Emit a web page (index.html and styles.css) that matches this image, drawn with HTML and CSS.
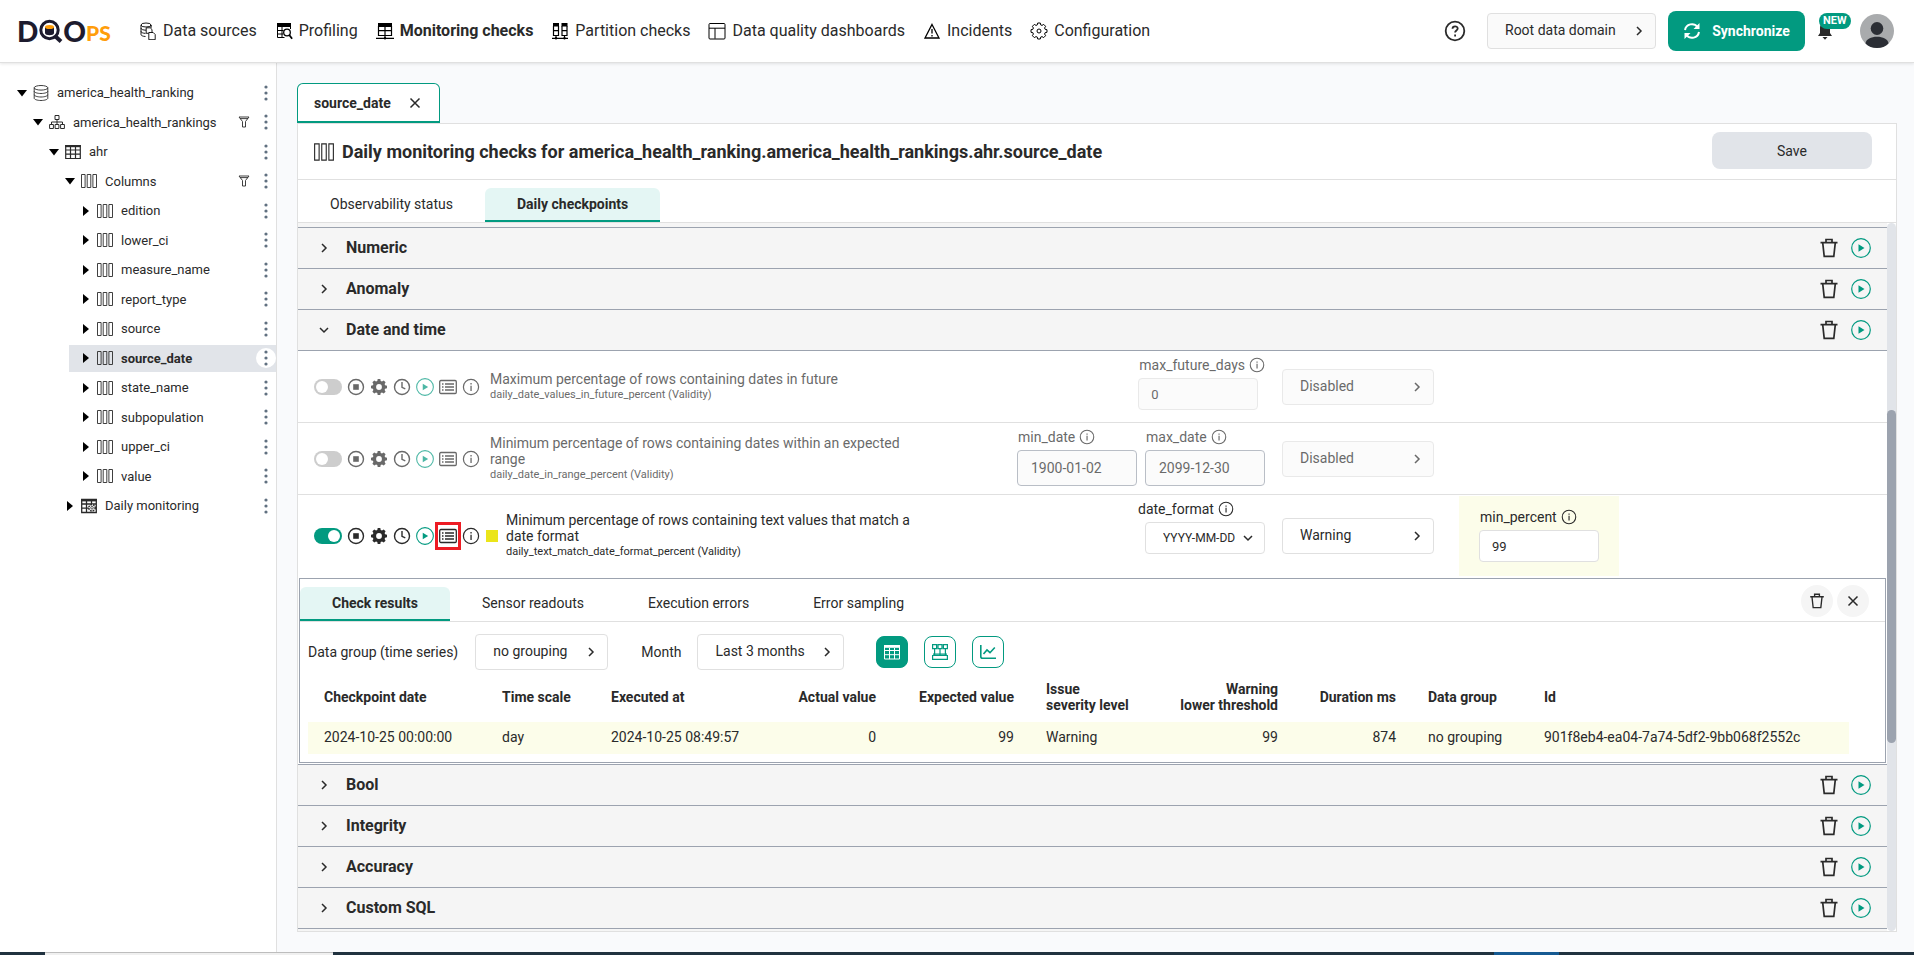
FILE: index.html
```
<!DOCTYPE html>
<html lang="en">
<head>
  <meta charset="UTF-8">
  <meta name="viewport" content="width=device-width, initial-scale=1.0">
  <title>DQOps - Daily monitoring checks</title>
  <link rel="stylesheet" href="styles.css">
</head>
<body>

  <!-- Icons -->
  <svg class="sprite" xmlns="http://www.w3.org/2000/svg">
    <symbol id="i-column" viewBox="0 0 16 16"><path d="M.5 1.5h3.6v13H.5zM6.2 1.5h3.6v13H6.2zM11.9 1.5h3.6v13h-3.6z" fill="none" stroke="currentColor" stroke-width=".9"/></symbol>
    <symbol id="i-db" viewBox="0 0 16 16"><g fill="none" stroke="currentColor" stroke-width=".9"><ellipse cx="8" cy="2.8" rx="6.8" ry="2.3"/><path d="M1.2 2.8v10.4c0 1.2 3 2.3 6.8 2.3s6.8-1.1 6.8-2.3V2.8M1.2 6.2c0 1.2 3 2.3 6.8 2.3s6.8-1.1 6.8-2.3M1.2 9.7c0 1.2 3 2.3 6.8 2.3s6.8-1.1 6.8-2.3"/></g></symbol>
    <symbol id="i-schema" viewBox="0 0 16 16"><path d="M6 1.5h4v4H6zM.6 10.5h3.8v4H.6zM6.1 10.5h3.8v4H6.1zM11.6 10.5h3.8v4h-3.8zM8 5.500v5M2.500 10.500V8h11v2.500" fill="none" stroke="currentColor"/></symbol>
    <symbol id="i-table" viewBox="0 0 16 16"><path d="M.7 1.500h14.600v13H.7zM.7 6h14.600M.7 10.200h14.600M5.500 2v12.500M10.500 2v12.500" fill="none" stroke="currentColor" stroke-width="1.200"/><path d="M.2 1h15.600v2.200H.2z"/></symbol>
    <symbol id="i-daily" viewBox="0 0 16 16"><path d="M.7 1.500h14.600v13H.7zM.7 6h14.600M.7 10.200h14.600M5.500 2v12.500M10.500 2v4" fill="none" stroke="currentColor" stroke-width="1.300"/><path d="M.2 1h15.600v2.400H.2z"/><circle cx="11" cy="9.800" r="3.200" fill="#fff" stroke="currentColor" stroke-width="1.500" stroke-dasharray="1.700 .9"/><circle cx="11" cy="9.800" r="1.300" fill="none" stroke="currentColor" stroke-width=".8"/></symbol>
    <symbol id="i-caret-down" viewBox="0 0 10 10"><path d="M0 2h10L5 8.500z"/></symbol>
    <symbol id="i-caret-right" viewBox="0 0 10 10"><path d="M2 0v10l6-5z"/></symbol>
    <symbol id="i-filter" viewBox="0 0 12 12"><path d="M1 1h10L7.500 5.500V11h-3V5.500zM2 2.600h8" fill="none" stroke="currentColor" stroke-width=".9"/></symbol>
    <symbol id="i-dots" viewBox="0 0 20 20"><circle cx="10" cy="4" r="1.600"/><circle cx="10" cy="10" r="1.600"/><circle cx="10" cy="16" r="1.600"/></symbol>
    <symbol id="i-right" viewBox="0 0 12 12"><path d="M4 2l4 4-4 4" fill="none" stroke="currentColor" stroke-width="1.500"/></symbol>
    <symbol id="i-down" viewBox="0 0 12 12"><path d="M2 4l4 4 4-4" fill="none" stroke="currentColor" stroke-width="1.500"/></symbol>
    <symbol id="i-trash" viewBox="0 0 20 20"><path d="M1.500 4.700h17M3.700 4.700l1.500 13.600h9.600l1.500-13.600M7 4.500V1.500h6v3" fill="none" stroke="currentColor" stroke-width="1.700"/></symbol>
    <symbol id="i-play" viewBox="0 0 20 20"><circle cx="10" cy="10" r="9.300" fill="none" stroke="currentColor" stroke-width="1.200"/><path d="M7.500 6.300v7.400l6-3.700z"/></symbol>
    <symbol id="i-stop" viewBox="0 0 18 18"><circle cx="9" cy="9" r="7.500" fill="none" stroke="currentColor" stroke-width="1.400"/><path d="M6.200 6.200h5.600v5.600H6.200z"/></symbol>
    <symbol id="i-gear" viewBox="0 0 18 18"><path fill-rule="evenodd" d="M7.700 1h2.600l.4 1.900 1.300.5 1.700-1 1.900 1.900-1 1.700.5 1.300 1.900.4v2.600l-1.900.4-.5 1.300 1 1.700-1.900 1.900-1.700-1-1.300.5-.4 1.900H7.700l-.4-1.900-1.300-.5-1.700 1-1.900-1.900 1-1.700-.5-1.300L1 10.300V7.700l1.900-.4.5-1.300-1-1.700 1.900-1.900 1.700 1 1.300-.5zM9 6.100a2.900 2.900 0 100 5.800 2.900 2.900 0 000-5.800z"/></symbol>
    <symbol id="i-clock" viewBox="0 0 18 18"><circle cx="9" cy="9" r="7.500" fill="none" stroke="currentColor" stroke-width="1.400"/><path d="M9 4v5.300l3.300 1.500" fill="none" stroke="currentColor" stroke-width="1.400"/></symbol>
    <symbol id="i-list" viewBox="0 0 18 18"><rect x=".7" y="2.500" width="16.600" height="13" rx="1.200" fill="none" stroke="currentColor" stroke-width="1.300"/><path d="M3 6h1.500M3 9h1.500M3 12h1.500M6 6h9M6 9h9M6 12h9" stroke="currentColor" stroke-width="1.300"/></symbol>
    <symbol id="i-info" viewBox="0 0 18 18"><circle cx="9" cy="9" r="7.600" fill="none" stroke="currentColor" stroke-width="1.200"/><path d="M8.400 5h1.300v1.400H8.400zM8.400 7.700h1.300V13H8.400z"/></symbol>
    <symbol id="i-close" viewBox="0 0 12 12"><path d="M1.500 1.500l9 9M10.500 1.500l-9 9" fill="none" stroke="currentColor" stroke-width="1.500"/></symbol>
  </svg>

  <!-- Header -->
  <header class="header">
    <a class="logo" href="#" aria-label="DQOps">
      <span>D</span>
      <svg width="25" height="25" viewBox="0 0 25 25"><circle cx="11.500" cy="11" r="8.700" fill="none" stroke="#1d1b2e" stroke-width="3"/><path d="M17 17l6 5.500" stroke="#1d1b2e" stroke-width="4"/><path d="M7 8v6c0 3 9 3 9 0V8z" fill="#1d1b2e"/><ellipse cx="11.500" cy="8" rx="4.500" ry="2" fill="#ff9d0a"/></svg>
      <span>O</span><span class="logo-ps">PS</span>
    </a>
    <nav class="nav">
      <a href="#"><svg viewBox="0 0 18 18"><g fill="none" stroke="currentColor" stroke-width=".9"><ellipse cx="7" cy="3" rx="5" ry="2"/><path d="M2 3v9.500c0 1 1.800 1.900 4.500 2M12 3v3M2 6.200c0 1.100 2.200 2 5 2M2 9.400c0 1 2 1.900 4.500 2M12 3v1.500"/><path d="M7.200 5.800h4l1.800 1.700v3M7.200 5.800v5.500h2.500"/><path d="M9.800 10.500h4.400l2 2v5.200H9.800z" fill="#fff"/></g></svg>Data sources</a>
      <a href="#"><svg viewBox="0 0 18 18"><path d="M2 1h14v4H2z"/><path d="M2.500 4v11.500h7M2.500 8.500h6M2.500 12h5.500M7 4v11.500M15.500 4v3" fill="none" stroke="currentColor"/><circle cx="12" cy="10.500" r="3.300" fill="#fff" stroke="currentColor" stroke-width="1.300"/><path d="M14.300 13l2.800 3.800" stroke="currentColor" stroke-width="1.800"/></svg>Profiling</a>
      <a href="#" class="active"><svg viewBox="0 0 18 18"><path d="M2 1h14v4H2z"/><path d="M2.500 4v9.500h13V4M2.500 8.700h13M9 4v12.500M0 16.300h7M11 16.300h7M7 16.300h4" fill="none" stroke="currentColor" stroke-width="1.200"/><circle cx="9" cy="16.300" r="1.200"/></svg>Monitoring checks</a>
      <a href="#"><svg viewBox="0 0 18 18"><path d="M2 1h6v3.500H2zM10.500 1h6v3.500h-6z"/><path d="M2.500 4v9.500h5V4M11 4v9.500h5V4M2.500 8.700h5M11 8.700h5M5 13.500v3M13.500 13.500v3M1 16.300h16" fill="none" stroke="currentColor" stroke-width="1.200"/><circle cx="5" cy="16.300" r="1.200"/><circle cx="13.500" cy="16.300" r="1.200"/></svg>Partition checks</a>
      <a href="#"><svg viewBox="0 0 18 18"><rect x="1" y="1.500" width="16" height="15.500" rx="1" fill="none" stroke="currentColor"/><path d="M1 6.200h16M7 6.200v10.500" stroke="currentColor"/></svg>Data quality dashboards</a>
      <a href="#"><svg viewBox="0 0 18 18"><path d="M9 2.500L16 16H2zM9 7v4.500M9 13v1.500" fill="none" stroke="currentColor" stroke-width="1.300"/></svg>Incidents</a>
      <a href="#"><svg viewBox="0 0 18 18"><path d="M7.700 1h2.600l.4 1.900 1.300.5 1.700-1 1.900 1.900-1 1.700.5 1.300 1.900.4v2.600l-1.900.4-.5 1.300 1 1.700-1.900 1.900-1.700-1-1.300.5-.4 1.900H7.700l-.4-1.900-1.300-.5-1.700 1-1.900-1.900 1-1.700-.5-1.300L1 10.300V7.700l1.900-.4.5-1.300-1-1.700 1.900-1.900 1.700 1 1.300-.5z" fill="none" stroke="currentColor"/><circle cx="9" cy="9" r="2" fill="none" stroke="currentColor"/></svg>Configuration</a>
    </nav>
    <div class="header-right">
      <button class="icon-btn" aria-label="Help"><svg width="24" height="24" viewBox="0 0 24 24"><g fill="none" stroke="currentColor" stroke-width="1.800"><circle cx="12" cy="12" r="9.300"/><path d="M9.500 9.800c0-3.300 5.200-3.200 5.200-.2 0 1.900-2.600 2-2.600 4"/><path d="M12.100 15.500v2"/></g></svg></button>
      <span class="select select-domain">
        <select aria-label="Data domain"><option>Root data domain</option></select>
        <svg class="chevron"><use href="#i-right"/></svg>
      </span>
      <button class="btn-sync"><svg width="18" height="18" viewBox="0 0 18 18"><path d="M2 8a7 7 0 0112.500-3M16 10a7 7 0 01-12.500 3" fill="none" stroke="currentColor" stroke-width="2"/><path d="M16.500 1v6h-6zM1.500 17v-6h6z"/></svg>Synchronize</button>
      <button class="icon-btn bell" aria-label="Notifications">
        <svg width="16" height="20" viewBox="0 0 16 20"><path d="M8 1.500c3.500 0 5 2.500 5 6v4.500l2 3H1l2-3V7.500c0-3.500 1.500-6 5-6zM5.500 16h5L8 18.800z"/></svg>
        <span class="badge">NEW</span>
      </button>
      <svg class="avatar" width="34" height="34" viewBox="0 0 34 34"><circle cx="17" cy="17" r="17" fill="#a9abad"/><ellipse cx="17" cy="14.500" rx="6.300" ry="6.500" fill="#2b2e35"/><path d="M5.500 29.500C6 20.500 28 20.500 28.500 29.500 23 35.500 11 35.500 5.500 29.500z" fill="#2b2e35"/></svg>
    </div>
  </header>

  <div class="layout">
    <!-- Tree -->
    <aside class="sidebar">
      <ul class="tree">
        <li class="level-0"><svg class="caret"><use href="#i-caret-down"/></svg><svg class="node"><use href="#i-db"/></svg><span>america_health_ranking</span><button class="dots" aria-label="Menu"><svg><use href="#i-dots"/></svg></button></li>
        <li class="level-1"><svg class="caret"><use href="#i-caret-down"/></svg><svg class="node"><use href="#i-schema"/></svg><span>america_health_rankings</span><svg class="filter"><use href="#i-filter"/></svg><button class="dots" aria-label="Menu"><svg><use href="#i-dots"/></svg></button></li>
        <li class="level-2"><svg class="caret"><use href="#i-caret-down"/></svg><svg class="node"><use href="#i-table"/></svg><span>ahr</span><button class="dots" aria-label="Menu"><svg><use href="#i-dots"/></svg></button></li>
        <li class="level-3"><svg class="caret"><use href="#i-caret-down"/></svg><svg class="node"><use href="#i-column"/></svg><span>Columns</span><svg class="filter"><use href="#i-filter"/></svg><button class="dots" aria-label="Menu"><svg><use href="#i-dots"/></svg></button></li>
        <li class="level-4"><svg class="caret"><use href="#i-caret-right"/></svg><svg class="node"><use href="#i-column"/></svg><span>edition</span><button class="dots" aria-label="Menu"><svg><use href="#i-dots"/></svg></button></li>
        <li class="level-4"><svg class="caret"><use href="#i-caret-right"/></svg><svg class="node"><use href="#i-column"/></svg><span>lower_ci</span><button class="dots" aria-label="Menu"><svg><use href="#i-dots"/></svg></button></li>
        <li class="level-4"><svg class="caret"><use href="#i-caret-right"/></svg><svg class="node"><use href="#i-column"/></svg><span>measure_name</span><button class="dots" aria-label="Menu"><svg><use href="#i-dots"/></svg></button></li>
        <li class="level-4"><svg class="caret"><use href="#i-caret-right"/></svg><svg class="node"><use href="#i-column"/></svg><span>report_type</span><button class="dots" aria-label="Menu"><svg><use href="#i-dots"/></svg></button></li>
        <li class="level-4"><svg class="caret"><use href="#i-caret-right"/></svg><svg class="node"><use href="#i-column"/></svg><span>source</span><button class="dots" aria-label="Menu"><svg><use href="#i-dots"/></svg></button></li>
        <li class="level-4 selected"><svg class="caret"><use href="#i-caret-right"/></svg><svg class="node"><use href="#i-column"/></svg><span>source_date</span><button class="dots" aria-label="Menu"><svg><use href="#i-dots"/></svg></button></li>
        <li class="level-4"><svg class="caret"><use href="#i-caret-right"/></svg><svg class="node"><use href="#i-column"/></svg><span>state_name</span><button class="dots" aria-label="Menu"><svg><use href="#i-dots"/></svg></button></li>
        <li class="level-4"><svg class="caret"><use href="#i-caret-right"/></svg><svg class="node"><use href="#i-column"/></svg><span>subpopulation</span><button class="dots" aria-label="Menu"><svg><use href="#i-dots"/></svg></button></li>
        <li class="level-4"><svg class="caret"><use href="#i-caret-right"/></svg><svg class="node"><use href="#i-column"/></svg><span>upper_ci</span><button class="dots" aria-label="Menu"><svg><use href="#i-dots"/></svg></button></li>
        <li class="level-4"><svg class="caret"><use href="#i-caret-right"/></svg><svg class="node"><use href="#i-column"/></svg><span>value</span><button class="dots" aria-label="Menu"><svg><use href="#i-dots"/></svg></button></li>
        <li class="level-3"><svg class="caret"><use href="#i-caret-right"/></svg><svg class="node"><use href="#i-daily"/></svg><span>Daily monitoring</span><button class="dots" aria-label="Menu"><svg><use href="#i-dots"/></svg></button></li>
      </ul>
    </aside>

    <main class="main">
      <div class="page-tabs">
        <div class="page-tab">source_date <button class="icon-btn" aria-label="Close tab"><svg width="12" height="12"><use href="#i-close"/></svg></button></div>
      </div>

      <section class="panel">
        <div class="title-bar">
          <svg width="20" height="20"><use href="#i-column"/></svg>
          <h1>Daily monitoring checks for america_health_ranking.america_health_rankings.ahr.source_date</h1>
          <button class="btn-save">Save</button>
        </div>

        <div class="tabs">
          <button class="tab">Observability status</button>
          <button class="tab active">Daily checkpoints</button>
        </div>

        <div class="scroll-area">
          <div class="checks">
            <div class="category"><svg class="chevron"><use href="#i-right"/></svg><h2>Numeric</h2><button class="icon-btn" aria-label="Delete"><svg><use href="#i-trash"/></svg></button><button class="icon-btn green" aria-label="Run"><svg><use href="#i-play"/></svg></button></div>
            <div class="category"><svg class="chevron"><use href="#i-right"/></svg><h2>Anomaly</h2><button class="icon-btn" aria-label="Delete"><svg><use href="#i-trash"/></svg></button><button class="icon-btn green" aria-label="Run"><svg><use href="#i-play"/></svg></button></div>
            <div class="category open"><svg class="chevron"><use href="#i-down"/></svg><h2>Date and time</h2><button class="icon-btn" aria-label="Delete"><svg><use href="#i-trash"/></svg></button><button class="icon-btn green" aria-label="Run"><svg><use href="#i-play"/></svg></button></div>

            <!-- Check: dates in future -->
            <div class="check disabled">
              <div class="check-main">
                <input type="checkbox" class="toggle" aria-label="Enable check">
                <div class="check-icons">
                  <button class="icon-btn" aria-label="Disable"><svg><use href="#i-stop"/></svg></button>
                  <button class="icon-btn" aria-label="Settings"><svg><use href="#i-gear"/></svg></button>
                  <button class="icon-btn" aria-label="Schedule"><svg><use href="#i-clock"/></svg></button>
                  <button class="icon-btn green" aria-label="Run check"><svg><use href="#i-play"/></svg></button>
                  <button class="icon-btn" aria-label="Results"><svg><use href="#i-list"/></svg></button>
                  <button class="icon-btn" aria-label="Info"><svg><use href="#i-info"/></svg></button>
                </div>
                <div class="check-name">
                  <p>Maximum percentage of rows containing dates in future</p>
                  <small>daily_date_values_in_future_percent (Validity)</small>
                </div>
              </div>
              <div class="params">
                <div class="field">
                  <label for="max-future">max_future_days <svg><use href="#i-info"/></svg></label>
                  <input type="text" id="max-future" value="0" disabled>
                </div>
              </div>
              <span class="select">
                <select aria-label="Severity" disabled><option>Disabled</option></select>
                <svg class="chevron"><use href="#i-right"/></svg>
              </span>
            </div>

            <!-- Check: date range -->
            <div class="check disabled">
              <div class="check-main">
                <input type="checkbox" class="toggle" aria-label="Enable check">
                <div class="check-icons">
                  <button class="icon-btn" aria-label="Disable"><svg><use href="#i-stop"/></svg></button>
                  <button class="icon-btn" aria-label="Settings"><svg><use href="#i-gear"/></svg></button>
                  <button class="icon-btn" aria-label="Schedule"><svg><use href="#i-clock"/></svg></button>
                  <button class="icon-btn green" aria-label="Run check"><svg><use href="#i-play"/></svg></button>
                  <button class="icon-btn" aria-label="Results"><svg><use href="#i-list"/></svg></button>
                  <button class="icon-btn" aria-label="Info"><svg><use href="#i-info"/></svg></button>
                </div>
                <div class="check-name">
                  <p>Minimum percentage of rows containing dates within an expected range</p>
                  <small>daily_date_in_range_percent (Validity)</small>
                </div>
              </div>
              <div class="params">
                <div class="field">
                  <label for="min-date">min_date <svg><use href="#i-info"/></svg></label>
                  <input type="text" id="min-date" class="date" value="1900-01-02" disabled>
                </div>
                <div class="field">
                  <label for="max-date">max_date <svg><use href="#i-info"/></svg></label>
                  <input type="text" id="max-date" class="date" value="2099-12-30" disabled>
                </div>
              </div>
              <span class="select">
                <select aria-label="Severity" disabled><option>Disabled</option></select>
                <svg class="chevron"><use href="#i-right"/></svg>
              </span>
            </div>

            <!-- Check: date format -->
            <div class="check enabled">
              <div class="check-main">
                <input type="checkbox" class="toggle" aria-label="Enable check" checked>
                <div class="check-icons">
                  <button class="icon-btn" aria-label="Disable"><svg><use href="#i-stop"/></svg></button>
                  <button class="icon-btn" aria-label="Settings"><svg><use href="#i-gear"/></svg></button>
                  <button class="icon-btn" aria-label="Schedule"><svg><use href="#i-clock"/></svg></button>
                  <button class="icon-btn green" aria-label="Run check"><svg><use href="#i-play"/></svg></button>
                  <button class="icon-btn highlight" aria-label="Results"><svg><use href="#i-list"/></svg></button>
                  <button class="icon-btn" aria-label="Info"><svg><use href="#i-info"/></svg></button>
                </div>
                <span class="severity"></span>
                <div class="check-name">
                  <p>Minimum percentage of rows containing text values that match a date format</p>
                  <small>daily_text_match_date_format_percent (Validity)</small>
                </div>
              </div>
              <div class="params">
                <div class="field">
                  <label for="date-format">date_format <svg><use href="#i-info"/></svg></label>
                  <span class="select select-small">
                    <select id="date-format"><option>YYYY-MM-DD</option></select>
                    <svg class="chevron"><use href="#i-down"/></svg>
                  </span>
                </div>
              </div>
              <span class="select">
                <select aria-label="Severity"><option>Warning</option></select>
                <svg class="chevron"><use href="#i-right"/></svg>
              </span>
              <div class="threshold">
                <div class="field">
                  <label for="min-percent">min_percent <svg><use href="#i-info"/></svg></label>
                  <input type="text" id="min-percent" value="99">
                </div>
              </div>
            </div>

            <!-- Check details -->
            <div class="details-wrap">
              <div class="details">
                <div class="tabs">
                  <button class="tab active">Check results</button>
                  <button class="tab">Sensor readouts</button>
                  <button class="tab">Execution errors</button>
                  <button class="tab">Error sampling</button>
                  <div class="tab-actions">
                    <button class="btn-round" aria-label="Delete results"><svg width="16" height="16"><use href="#i-trash"/></svg></button>
                    <button class="btn-round" aria-label="Close"><svg width="12" height="12"><use href="#i-close"/></svg></button>
                  </div>
                </div>
                <div class="filters">
                  <label for="data-group">Data group (time series)</label>
                  <span class="select select-group">
                    <select id="data-group"><option>no grouping</option></select>
                    <svg class="chevron"><use href="#i-right"/></svg>
                  </span>
                  <label for="month">Month</label>
                  <span class="select select-month">
                    <select id="month"><option>Last 3 months</option></select>
                    <svg class="chevron"><use href="#i-right"/></svg>
                  </span>
                  <div class="views">
                    <button class="btn-view active" aria-label="Table"><svg width="16" height="16" viewBox="0 0 16 16"><path d="M.5 2h15v13H.5zM.5 6.500h15M.5 10.700h15M5.500 4v11M10.500 4v11" fill="none" stroke="currentColor"/><path d="M0 1h16v2.800H0z"/></svg></button>
                    <button class="btn-view" aria-label="Grouped"><svg width="16" height="16" viewBox="0 0 16 16"><path d="M.6.6h4v4h-4zM6 .6h4v4H6zM11.400.6h4v4h-4zM.6 11.500h14.800v3.900H.6zM2.600 4.600v6.900M8 4.600v6.900M13.400 4.600v6.900M1 10.200h14" fill="none" stroke="currentColor" stroke-width="1.200"/></svg></button>
                    <button class="btn-view" aria-label="Chart"><svg width="16" height="16" viewBox="0 0 16 16"><path d="M.8 1v11.500c0 1.200.6 1.800 1.800 1.800H16M3.500 10L7 6l3 2.700L14.800 3.500" fill="none" stroke="currentColor" stroke-width="1.600"/></svg></button>
                  </div>
                </div>
                <table class="results">
                  <colgroup>
                    <col class="w-date"><col class="w-scale"><col class="w-exec"><col class="w-actual"><col class="w-expected"><col class="w-issue"><col class="w-warn"><col class="w-duration"><col class="w-group"><col>
                  </colgroup>
                  <thead>
                    <tr>
                      <th>Checkpoint date</th><th>Time scale</th><th>Executed at</th><th class="num">Actual value</th><th class="num">Expected value</th><th>Issue<br>severity level</th><th class="num">Warning<br>lower threshold</th><th class="num">Duration ms</th><th>Data group</th><th>Id</th>
                    </tr>
                  </thead>
                  <tbody>
                    <tr>
                      <td>2024-10-25 00:00:00</td><td>day</td><td>2024-10-25 08:49:57</td><td class="num">0</td><td class="num">99</td><td>Warning</td><td class="num">99</td><td class="num">874</td><td>no grouping</td><td>901f8eb4-ea04-7a74-5df2-9bb068f2552c</td>
                    </tr>
                  </tbody>
                </table>
              </div>
            </div>

            <div class="category"><svg class="chevron"><use href="#i-right"/></svg><h2>Bool</h2><button class="icon-btn" aria-label="Delete"><svg><use href="#i-trash"/></svg></button><button class="icon-btn green" aria-label="Run"><svg><use href="#i-play"/></svg></button></div>
            <div class="category"><svg class="chevron"><use href="#i-right"/></svg><h2>Integrity</h2><button class="icon-btn" aria-label="Delete"><svg><use href="#i-trash"/></svg></button><button class="icon-btn green" aria-label="Run"><svg><use href="#i-play"/></svg></button></div>
            <div class="category"><svg class="chevron"><use href="#i-right"/></svg><h2>Accuracy</h2><button class="icon-btn" aria-label="Delete"><svg><use href="#i-trash"/></svg></button><button class="icon-btn green" aria-label="Run"><svg><use href="#i-play"/></svg></button></div>
            <div class="category open"><svg class="chevron"><use href="#i-right"/></svg><h2>Custom SQL</h2><button class="icon-btn" aria-label="Delete"><svg><use href="#i-trash"/></svg></button><button class="icon-btn green" aria-label="Run"><svg><use href="#i-play"/></svg></button></div>
          </div>
          <div class="scrollbar"><div class="thumb"></div></div>
        </div>
      </section>
    </main>
  </div>

  <!-- Bottom strip -->
  <div class="taskbar"><span class="task-start"></span><span class="task-search"></span><span class="task-apps"></span><span class="task-active"></span><span class="task-tray"></span></div>

</body>
</html>
```
FILE: styles.css
```
:root {
  --green: #029a80;
  --green-light: #e4f6f4;
  --text: #2a2a2a;
  --border: #e0e0e0;
  --line: #9ca3af;
  --gray: #f5f5f5;
  --gray-dark: #e1e4e9;
  --yellow: #fcfdea;
}

* {
  box-sizing: border-box;
}

body {
  margin: 0;
  height: 100vh;
  display: flex;
  flex-direction: column;
  overflow: hidden;
  font-family: Roboto, "Liberation Sans", sans-serif;
  font-size: 14px;
  line-height: 16px;
  color: var(--text);
  background-color: #f9fafc;
}

h1, h2, p, ul {
  margin: 0;
  padding: 0;
}

button, input, select {
  font-family: inherit;
  font-size: 14px;
  color: inherit;
}

button {
  cursor: pointer;
}

svg {
  display: block;
  flex: none;
  fill: currentColor;
}

.sprite {
  display: none;
}

.icon-btn {
  padding: 0;
  border: none;
  background: none;
}

.green {
  color: var(--green);
}

/* Header */
.header {
  flex: none;
  height: 63px;
  display: flex;
  align-items: center;
  padding: 0 20px 0 17px;
  background-color: #ffffff;
  border-bottom: 1px solid var(--border);
  box-shadow: 0 1px 3px rgba(0, 0, 0, 0.1);
  z-index: 1;
}

.logo {
  width: 122px;
  display: flex;
  align-items: center;
  font-family: Lato, sans-serif;
  font-size: 28px;
  font-weight: 900;
  line-height: 28px;
  color: #1d1b2e;
  text-decoration: none;
}

.logo-ps {
  align-self: flex-end;
  font-size: 21px;
  line-height: 24px;
  color: #ff9d0a;
}

.nav {
  display: flex;
  gap: 18px;
}

.nav a {
  display: flex;
  align-items: center;
  gap: 6px;
  font-size: 16px;
  color: var(--text);
  text-decoration: none;
}

.nav a.active {
  font-weight: 700;
}

.nav svg {
  width: 18px;
  height: 18px;
  color: #000000;
}

.header-right {
  margin-left: auto;
  display: flex;
  align-items: center;
  gap: 12px;
}

.btn-sync {
  width: 137px;
  height: 40px;
  display: flex;
  align-items: center;
  justify-content: center;
  gap: 11px;
  border: none;
  border-radius: 8px;
  background-color: var(--green);
  color: #ffffff;
  font-weight: 700;
}

.bell {
  position: relative;
}

.badge {
  position: absolute;
  top: -8px;
  left: 2px;
  padding: 0 4px;
  border-radius: 8px;
  background-color: var(--green);
  color: #ffffff;
  font-size: 11px;
  font-weight: 700;
  line-height: 16px;
}

.avatar {
  margin-left: 15px;
}

/* Drop-downs */
.select {
  position: relative;
  display: block;
  width: 152px;
  height: 36px;
}

.select select {
  appearance: none;
  width: 100%;
  height: 100%;
  padding: 0 28px 2px 17px;
  border: 1px solid var(--border);
  border-radius: 4px;
  background-color: #ffffff;
  opacity: 1;
}

.select .chevron {
  position: absolute;
  top: 12px;
  right: 11px;
  pointer-events: none;
}

.chevron {
  width: 12px;
  height: 12px;
}

.select-domain {
  width: 169px;
  margin-left: 8px;
}

.select-domain select {
  background-color: #fafafa;
}

.select-small {
  width: 120px;
  height: 32px;
  margin-left: 8px;
}

.select-small select {
  padding: 0 20px 0 17px;
  font-size: 12px;
}

.select-small .chevron {
  top: 10px;
}

.select-group {
  width: 133px;
}

.select-month {
  width: 147px;
}

/* Layout */
.layout {
  flex: 1;
  min-height: 0;
  display: flex;
}

.sidebar {
  width: 277px;
  flex: none;
  padding-top: 16px;
  background-color: #ffffff;
  border-right: 1px solid var(--border);
}

.tree {
  list-style: none;
  font-size: 13px;
  line-height: 1.5;
}

.tree li {
  display: flex;
  align-items: center;
  margin-bottom: 2px;
  padding: 4px 0 4px 12px;
}

.level-0 { margin-left: 5px; }
.level-1 { margin-left: 21px; }
.level-2 { margin-left: 37px; }
.level-3 { margin-left: 53px; }
.level-4 { margin-left: 69px; }

.tree li.selected {
  background-color: var(--gray-dark);
  font-weight: 700;
}

.tree span {
  flex: 1;
}

.caret {
  width: 10px;
  height: 10px;
  margin-right: 6px;
  color: #000000;
}

.node {
  width: 16px;
  height: 16px;
  margin-right: 8px;
}

.filter {
  width: 12px;
  height: 12px;
  margin-right: 6px;
}

.dots {
  width: 20px;
  height: 20px;
  margin: -4px 0;
  padding: 0;
  border: none;
  border-radius: 50%;
  background-color: #ffffff;
  color: #607080;
}

.dots svg {
  width: 20px;
  height: 20px;
}

/* Main panel */
.main {
  flex: 1;
  min-width: 0;
  display: flex;
  flex-direction: column;
  padding: 20px 17px 20px 20px;
}

.page-tabs {
  display: flex;
}

.page-tab {
  height: 40px;
  display: flex;
  align-items: center;
  gap: 18px;
  padding: 0 18px 0 16px;
  border: 1px solid var(--green);
  border-bottom-width: 2px;
  border-radius: 6px 6px 0 0;
  background-color: #ffffff;
  font-weight: 700;
}

.panel {
  flex: 1;
  min-height: 0;
  display: flex;
  flex-direction: column;
  border: 1px solid var(--border);
  background-color: #ffffff;
}

.title-bar {
  height: 56px;
  display: flex;
  align-items: center;
  gap: 8px;
  padding: 0 24px 0 16px;
  border-bottom: 1px solid var(--border);
}

.title-bar h1 {
  flex: 1;
  font-size: 18px;
  line-height: 24px;
  font-weight: 700;
}

.btn-save {
  width: 160px;
  height: 37px;
  margin-bottom: 2px;
  border: none;
  border-radius: 8px;
  background-color: var(--gray-dark);
}

/* Tabs */
.tabs {
  flex: none;
  height: 43px;
  display: flex;
  align-items: flex-end;
  border-bottom: 1px solid var(--border);
}

.tab {
  height: 34px;
  padding: 0 32px 1px;
  border: none;
  border-bottom: 2px solid transparent;
  border-radius: 6px 6px 0 0;
  background: none;
}

.tab.active {
  border-bottom-color: var(--green);
  background-color: var(--green-light);
  font-weight: 700;
}

.tab-actions {
  display: flex;
  gap: 4px;
  margin: 0 16px 4px auto;
}

.btn-round {
  width: 32px;
  height: 32px;
  display: grid;
  place-items: center;
  padding: 0;
  border: none;
  border-radius: 50%;
  background-color: var(--gray);
}

/* Scrolled list of checks */
.scroll-area {
  flex: 1;
  min-height: 0;
  display: flex;
}

.checks {
  flex: 1;
  min-width: 0;
  overflow: hidden;
  padding-top: 4px;
  background-color: var(--gray);
}

.scrollbar {
  position: relative;
  width: 9px;
  border-radius: 5px;
  background-color: var(--gray-dark);
}

.thumb {
  position: absolute;
  top: 26.4%;
  width: 100%;
  height: 47%;
  border-radius: 5px;
  background-color: var(--line);
}

.category {
  height: 41px;
  display: flex;
  align-items: center;
  padding: 0 16px 0 20px;
  border-top: 1px solid var(--line);
}

.category.open {
  height: 42px;
  border-bottom: 1px solid var(--line);
}

.category h2 {
  flex: 1;
  margin-left: 16px;
  font-size: 16px;
  font-weight: 700;
}

.category .icon-btn {
  margin-left: 12px;
}

.category .icon-btn svg {
  width: 20px;
  height: 20px;
}

/* Check row */
.check {
  height: 72px;
  display: flex;
  align-items: center;
  padding-left: 16px;
  border-bottom: 1px solid var(--border);
  background-color: #ffffff;
}

.check.enabled {
  height: 83px;
  padding-bottom: 1px;
  border-bottom: none;
}

.check.disabled > * {
  opacity: 0.7;
}

.check-main {
  width: 616px;
  flex: none;
  display: flex;
  align-items: center;
}

.toggle {
  appearance: none;
  width: 28px;
  height: 16px;
  margin: 0 5px 0 0;
  padding: 2px;
  border-radius: 8px;
  background-color: #b8b8b8;
}

.toggle::before {
  content: "";
  display: block;
  width: 12px;
  height: 12px;
  border-radius: 50%;
  background-color: #ffffff;
}

.toggle:checked {
  background-color: var(--green);
}

.toggle:checked::before {
  margin-left: auto;
}

.check-icons {
  display: flex;
  gap: 5px;
  margin-right: 10px;
}

.check-icons svg {
  width: 18px;
  height: 18px;
}

.highlight {
  margin: -5px -4px;
  padding: 2px 1px;
  border: 3px solid #ed1c24;
}

.severity {
  width: 12px;
  height: 12px;
  margin: 0 8px 0 -4px;
  background-color: #ebe51a;
}

.check-name {
  flex: 1;
  min-width: 0;
}

.check-name small {
  display: block;
  font-size: 11px;
}

.params {
  width: 335px;
  align-self: flex-start;
  display: flex;
  justify-content: flex-end;
  gap: 8px;
  margin-right: 17px;
  padding-top: 6px;
}

.field label {
  display: flex;
  align-items: center;
  gap: 4px;
  margin-bottom: 5px;
  padding-left: 1px;
}

.field label svg {
  width: 16px;
  height: 16px;
}

.field input {
  display: block;
  width: 120px;
  height: 32px;
  padding: 0 12px;
  border: 1px solid var(--border);
  border-radius: 4px;
  background-color: #ffffff;
  font-size: 13px;
}

.field input.date {
  height: 36px;
  padding: 0 13px;
  border-color: var(--line);
  font-size: 14px;
}

.check .field input:disabled,
.check .select select:disabled {
  background-color: #fafafa;
  color: var(--text);
}

.threshold {
  height: 80px;
  margin-left: 25px;
  padding: 13px 20px;
  background-color: var(--yellow);
}

/* Check details */
.details-wrap {
  padding: 0 1px 1px;
  background-color: #ffffff;
}

.details {
  padding-bottom: 8px;
  border: 1px solid var(--line);
}

.filters {
  display: flex;
  align-items: center;
  padding: 12px 8px 0;
}

.filters .select-group {
  margin: 0 33px 0 17px;
}

.filters .select-month {
  margin: 0 32px 0 16px;
}

.views {
  display: flex;
  gap: 16px;
}

.btn-view {
  width: 32px;
  height: 32px;
  display: grid;
  place-items: center;
  padding: 0;
  border: 1px solid var(--green);
  border-radius: 8px;
  background-color: #ffffff;
  color: var(--green);
}

.btn-view.active {
  background-color: var(--green);
  color: #ffffff;
}

.results {
  width: calc(100% - 44px);
  margin-left: 8px;
  table-layout: fixed;
  border-collapse: collapse;
}

.results th,
.results td {
  padding: 0 16px;
  text-align: left;
  white-space: nowrap;
}

.results th {
  height: 52px;
  padding-top: 2px;
  font-weight: 700;
}

.results td {
  height: 32px;
  padding-bottom: 2px;
}

.results .num {
  text-align: right;
}

.results tbody tr {
  background-color: var(--yellow);
}

.w-date { width: 178px; }
.w-scale { width: 109px; }
.w-exec { width: 172px; }
.w-actual { width: 125px; }
.w-expected { width: 138px; }
.w-issue { width: 130px; }
.w-warn { width: 134px; }
.w-duration { width: 118px; }
.w-group { width: 116px; }

/* Bottom strip */
.taskbar {
  flex: none;
  height: 3px;
  display: flex;
  background-color: #20323f;
}

.task-start {
  width: 45px;
}

.task-search {
  width: 288px;
  border-top: 1px solid #bdbdbd;
  background-color: #f0f0f0;
}

.task-apps {
  flex: 1;
}

.task-active {
  width: 65px;
  background-color: #165a92;
}

.task-tray {
  width: 355px;
}
```
